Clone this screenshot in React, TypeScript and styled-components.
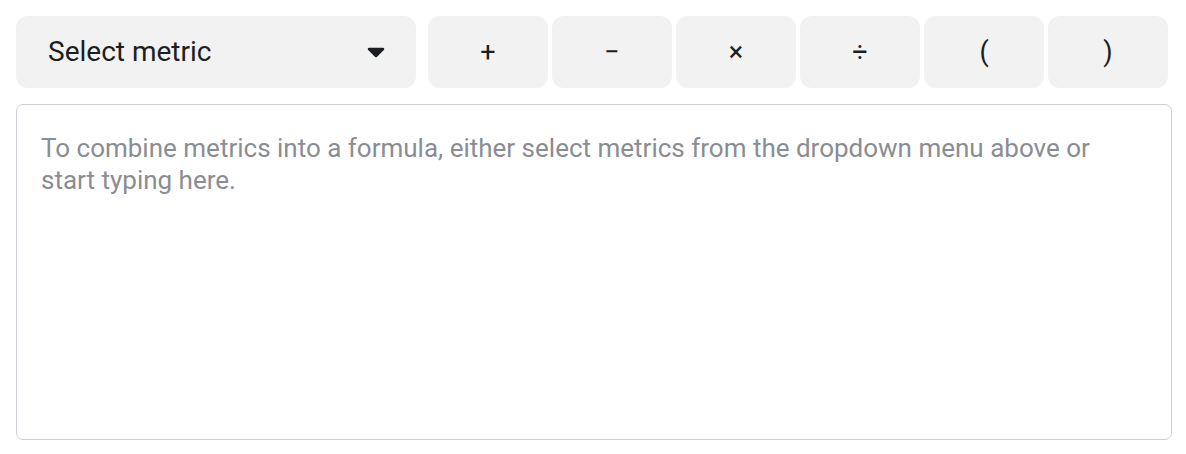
import React, { useState } from "react";
import styled, { createGlobalStyle } from "styled-components";

const GlobalStyle = createGlobalStyle`
  body {
    margin: 0;
    background: #ffffff;
    font-family: Roboto, "Liberation Sans", Arial, sans-serif;
  }
`;

const Page = styled.div`
  padding: 16px;
  display: flex;
  flex-direction: column;
  gap: 16px;
  width: 1156px;
`;

const Toolbar = styled.div`
  display: flex;
  align-items: stretch;
  gap: 12px;
  height: 72px;
`;

const MetricSelect = styled.button`
  width: 400px;
  display: flex;
  align-items: center;
  justify-content: space-between;
  padding: 0 31px 0 32px;
  border: none;
  border-radius: 12px;
  background: #f2f2f2;
  color: #1c1e21;
  font-family: Roboto, "Liberation Sans", Arial, sans-serif;
  font-size: 28px;
  line-height: 32px;
  cursor: pointer;
`;

const Operators = styled.div`
  display: flex;
  gap: 4px;
`;

const OperatorButton = styled.button`
  width: 120px;
  border: none;
  border-radius: 12px;
  background: #f2f2f2;
  color: #1c1e21;
  font-family: Roboto, "Liberation Sans", Arial, sans-serif;
  font-size: 27px;
  line-height: 32px;
  padding: 0;
  cursor: pointer;
`;

const FormulaInput = styled.textarea`
  box-sizing: border-box;
  width: 1156px;
  height: 336px;
  margin: 0;
  padding: 27px 24px;
  border: 1.5px solid #ccd0d5;
  border-radius: 7px;
  resize: none;
  outline: none;
  color: #1c1e21;
  font-family: Roboto, "Liberation Sans", Arial, sans-serif;
  font-size: 26px;
  line-height: 32px;

  &::placeholder {
    color: #8a8d93;
  }
`;

function Caret() {
  return (
    <svg width="18" height="11" viewBox="0 0 18 11">
      <path
        d="M2 2 L16 2 L9 9 Z"
        fill="#1c1e21"
        stroke="#1c1e21"
        strokeWidth="2.5"
        strokeLinejoin="round"
      />
    </svg>
  );
}

const OPERATORS = ["+", "\u2212", "\u00d7", "\u00f7", "(", ")"];

export default function App() {
  const [formula, setFormula] = useState("");

  return (
    <>
      <GlobalStyle />
      <Page>
        <Toolbar>
          <MetricSelect type="button">
            <span>Select metric</span>
            <Caret />
          </MetricSelect>
          <Operators>
            {OPERATORS.map((op) => (
              <OperatorButton
                key={op}
                type="button"
                onClick={() => setFormula(formula + " " + op + " ")}
              >
                {op}
              </OperatorButton>
            ))}
          </Operators>
        </Toolbar>
        <FormulaInput
          value={formula}
          onChange={(event) => setFormula(event.target.value)}
          placeholder="To combine metrics into a formula, either select metrics from the dropdown menu above or start typing here."
        />
      </Page>
    </>
  );
}
